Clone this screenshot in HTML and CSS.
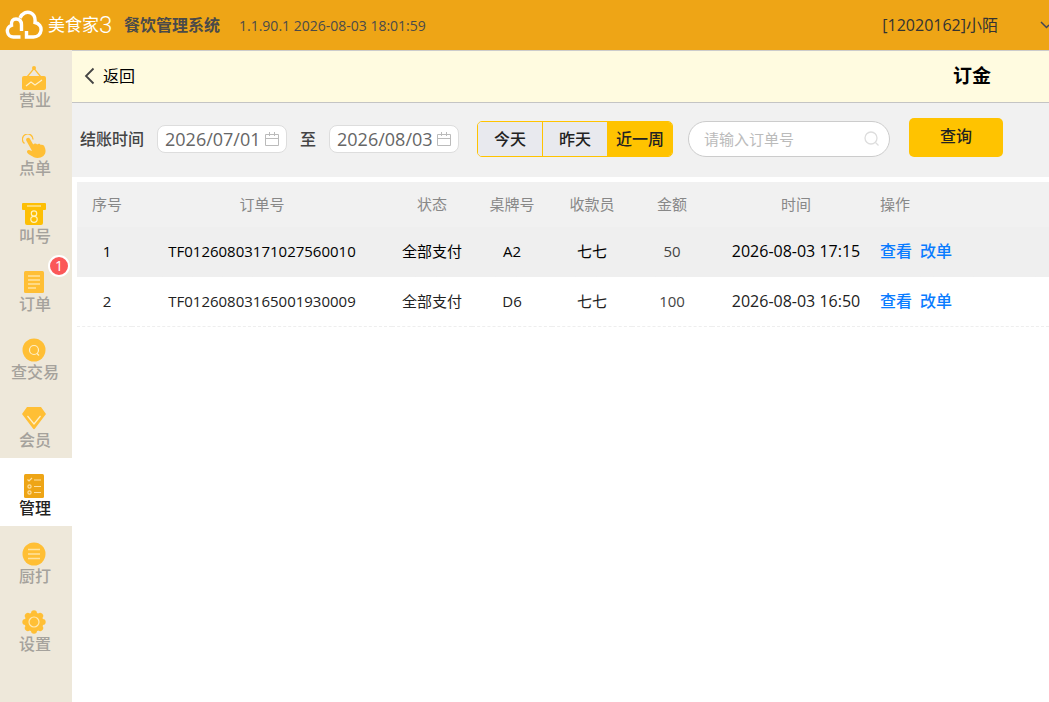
FILE: index.html
```
<!DOCTYPE html>
<html lang="zh-CN">
<head>
  <meta charset="UTF-8">
  <title>餐饮管理系统 - 订金</title>
  <link rel="stylesheet" href="styles.css">
</head>
<body>
  <header class="topbar">
    <div class="logo">
      <svg width="38" height="30" viewBox="0 0 38 30" fill="none" stroke="#fff" stroke-width="3.4">
        <path d="M15.500 27H8.500a6 6 0 0 1-2-11.700C6 11 8 9 11 9c3.500 0 5.500 2 5.500 6v6"/>
        <path d="M15 8c2-5 7-7 11-5 3.500 1.700 4.500 5 4 9.500 4 1 6.500 4 6 8-.500 4-3.500 6.500-7.500 6.500H21.500v-6"/>
      </svg>
      <span class="logo-text">美食家</span><span class="logo-num">3</span>
    </div>
    <span class="system">餐饮管理系统</span>
    <span class="version">1.1.90.1 2026-08-03 18:01:59</span>
    <span class="user">[12020162]小陌</span>
    <svg class="more" width="9" height="8" viewBox="0 0 9 8" fill="none" stroke="#445" stroke-width="1.500"><path d="M1 1l5.500 5.500L9 4"/></svg>
  </header>

  <div class="layout">
    <nav class="sidebar">
      <a href="#">
        <svg width="24" height="24" viewBox="0 0 24 24"><path d="M5 11L12 2.500 19 11" fill="none" stroke="#ffbf35" stroke-width="1.200"/><circle cx="12" cy="2" r="2" fill="#ffbf35"/><rect y="10" width="24" height="14" rx="2" fill="#ffbf35"/><path d="M4 20l5-4 4 3 7-5" fill="none" stroke="#fff0c8" stroke-width="1.200"/></svg>
        <span>营业</span>
      </a>
      <a href="#">
        <svg width="24" height="24" viewBox="0 0 24 24"><path d="M2.500 9.500a5.300 5.300 0 1 1 8.500-4" fill="none" stroke="#ffbf35" stroke-width="1.300"/><path d="M4.500 4.500c1.200-1.300 3-.8 3.700.7l3 5.300c1-1.500 3-1.500 4 0 1-1 3-1 3.500.5 1.500-.8 3.200 0 3.700 1.500 1.700 3.500 1.700 7-1 9.500-2.500 2-6.500 2.500-9.500 1.200-2-1-5-2.700-6.500-4.200-1-1.500 0-3.200 1.700-2.900l3 .9L4.500 7c-.5-1-.5-1.800 0-2.500z" fill="#ffbf35"/></svg>
        <span>点单</span>
      </a>
      <a href="#">
        <svg width="24" height="24" viewBox="0 0 24 24"><path d="M1 1h22a1 1 0 0 1 1 1v5a1 1 0 0 1-1 1h-2v13a2 2 0 0 1-2 2H5a2 2 0 0 1-2-2V8H1a1 1 0 0 1-1-1V2a1 1 0 0 1 1-1z" fill="#fdbf05"/><path d="M5 4h14" stroke="#ffe58f" stroke-width="1.500"/><g fill="none" stroke="#fff3c0" stroke-width="1.200"><ellipse cx="12" cy="11.500" rx="2.700" ry="2.700"/><ellipse cx="12" cy="17.300" rx="3.200" ry="3"/></g></svg>
        <span>叫号</span>
      </a>
      <a href="#">
        <svg width="24" height="24" viewBox="0 0 24 24"><rect x="2" y="1" width="20" height="22" rx="1.500" fill="#ffbf35"/><path d="M6 6h12M6 10h12M6 14h12M6 18h8" stroke="#ffe3a0" stroke-width="1.500"/></svg>
        <span>订单</span>
        <i class="badge">1</i>
      </a>
      <a href="#">
        <svg width="24" height="24" viewBox="0 0 24 24"><circle cx="12" cy="12" r="11.500" fill="#ffbf35"/><g fill="none" stroke="#fff0c8" stroke-width="1.200"><circle cx="12" cy="12" r="4.500"/><path d="M15 15.500l2 2"/></g></svg>
        <span>查交易</span>
      </a>
      <a href="#">
        <svg width="24" height="24" viewBox="0 0 24 24"><path d="M5 1h14l5 7-11 14.500a1.200 1.200 0 0 1-2 0L0 8z" fill="#ffbf35"/><path d="M5.500 10l6.500 8 6.500-8" fill="none" stroke="#fff0c8" stroke-width="1.200"/></svg>
        <span>会员</span>
      </a>
      <a href="#" class="active">
        <svg width="24" height="24" viewBox="0 0 24 24"><rect x="2" width="20" height="24" rx="1.500" fill="#eea516"/><g fill="none" stroke="#ffe0a0" stroke-width="1.200"><path d="M5.500 5.500L7 7l3-3M12 6h7M12 12.500h7M12 18.500h7"/><circle cx="7.500" cy="12.500" r="1.600"/><circle cx="7.500" cy="18.500" r="1.600"/></g></svg>
        <span>管理</span>
      </a>
      <a href="#">
        <svg width="24" height="24" viewBox="0 0 24 24"><circle cx="12" cy="12" r="11.500" fill="#ffbf35"/><path d="M6 7.500h12M6 12h12M6 16.500h12" stroke="#ffe3a0" stroke-width="1.500"/></svg>
        <span>厨打</span>
      </a>
      <a href="#">
        <svg width="24" height="24" viewBox="0 0 24 24"><g fill="#ffbf35"><circle cx="12" cy="12" r="9.500"/><g id="teeth"><circle cx="12" cy="3.300" r="3"/><circle cx="12" cy="20.700" r="3"/><circle cx="3.300" cy="12" r="3"/><circle cx="20.700" cy="12" r="3"/></g><use href="#teeth" transform="rotate(45 12 12)"/></g><circle cx="12" cy="12" r="5" fill="none" stroke="#ffe9b5" stroke-width="1.200"/></svg>
        <span>设置</span>
      </a>
    </nav>

    <main class="content">
      <div class="crumb">
        <a href="#" class="back">
          <svg width="11" height="18" viewBox="0 0 11 18" fill="none" stroke="#444" stroke-width="1.800"><path d="M9.500 1.500L2 9l7.500 7.500"/></svg>
          返回
        </a>
        <h1>订金</h1>
      </div>

      <form class="filter">
        <div class="dates">
          <label for="start">结账时间</label>
          <div class="date">
            <input type="text" id="start" value="2026/07/01">
            <svg width="14" height="14" viewBox="0 0 14 14" fill="none" stroke="#bbb"><path d="M.5 2.500h13v11H.5zM.5 6.500h13M4.500 0v4M9.500 0v4"/></svg>
          </div>
          <label for="end">至</label>
          <div class="date">
            <input type="text" id="end" value="2026/08/03">
            <svg width="14" height="14" viewBox="0 0 14 14" fill="none" stroke="#bbb"><path d="M.5 2.500h13v11H.5zM.5 6.500h13M4.500 0v4M9.500 0v4"/></svg>
          </div>
        </div>
        <div class="range">
          <button type="button">今天</button>
          <button type="button">昨天</button>
          <button type="button" class="on">近一周</button>
        </div>
        <div class="search">
          <input type="text" placeholder="请输入订单号" aria-label="订单号">
          <svg width="16" height="16" viewBox="0 0 16 16" fill="none" stroke="#ddd" stroke-width="1.300"><circle cx="7" cy="7" r="6"/><path d="M11.500 11.500l3 3"/></svg>
        </div>
        <button type="submit" class="query">查询</button>
      </form>

      <table class="orders">
        <thead>
          <tr>
            <th class="c-no">序号</th>
            <th class="c-order">订单号</th>
            <th class="c-mid">状态</th>
            <th class="c-mid">桌牌号</th>
            <th class="c-mid">收款员</th>
            <th class="c-mid">金额</th>
            <th class="c-time">时间</th>
            <th class="c-ops">操作</th>
          </tr>
        </thead>
        <tbody>
          <tr class="current">
            <td class="c-no">1</td>
            <td>TF01260803171027560010</td>
            <td>全部支付</td>
            <td>A2</td>
            <td>七七</td>
            <td class="amount">50</td>
            <td class="time">2026-08-03 17:15</td>
            <td class="c-ops"><a href="#">查看</a><a href="#">改单</a></td>
          </tr>
          <tr>
            <td class="c-no">2</td>
            <td>TF01260803165001930009</td>
            <td>全部支付</td>
            <td>D6</td>
            <td>七七</td>
            <td class="amount">100</td>
            <td class="time">2026-08-03 16:50</td>
            <td class="c-ops"><a href="#">查看</a><a href="#">改单</a></td>
          </tr>
        </tbody>
      </table>
    </main>
  </div>
</body>
</html>
```
FILE: styles.css
```
* { box-sizing: border-box; }
body { margin: 0; min-height: 100vh; display: flex; flex-direction: column; background: #fff; color: #333; font-family: "Open Sans", "Noto Sans CJK SC", sans-serif; font-size: 16px; line-height: 20px; }
a { text-decoration: none; }
svg { flex: none; }
button, input { font-family: inherit; font-size: 16px; }

.topbar { display: flex; align-items: center; height: 50px; background: #eea516; overflow: hidden; white-space: nowrap; }
.logo { display: flex; align-items: center; width: 124px; padding-left: 5px; color: #fff; }
.logo-text { margin-left: 5px; font-size: 17px; }
.logo-num { font-family: Roboto, sans-serif; font-size: 24px; font-weight: 300; }
.system { width: 115px; font-weight: bold; color: #4a4a4a; }
.version { padding-top: 2px; font-size: 14px; color: #4a4a4a; }
.user { margin-left: auto; color: #333; }
.more { margin-left: 42px; }

.layout { flex: 1; display: flex; }
.sidebar { width: 72px; flex: none; background: #eee8da; }
.sidebar a { position: relative; display: flex; flex-direction: column; align-items: center; height: 68px; padding: 16px 4px 0 0; color: #a5a29c; font-weight: 500; }
.sidebar span { margin-left: 2px; }
.sidebar a.active { background: #fff; color: #222; }
.badge { position: absolute; top: 1px; right: 2px; width: 22px; height: 22px; border: 2px solid #fff; border-radius: 50%; background: #fb5858; color: #fff; font-size: 14px; font-style: normal; line-height: 18px; text-align: center; }

.content { flex: 1; min-width: 0; border-top: 1px solid #ccc; }
.crumb { display: flex; align-items: center; justify-content: space-between; height: 52px; padding: 0 58px 2px 12px; background: #fffbe0; border-bottom: 1px solid #c4c4c4; }
.back { display: flex; align-items: center; gap: 8px; color: #000; }
.crumb h1 { margin: 0; font-size: 19px; color: #000; }

.filter { display: flex; align-items: flex-end; padding: 15px 0 20px 8px; background: #f1f1f1; white-space: nowrap; }
.dates { display: flex; align-items: center; gap: 13px; height: 36px; margin-right: 18px; }
.dates label { font-weight: 500; color: #444; }
.date { display: flex; align-items: center; width: 130px; height: 28px; padding: 0 7px; border: 1px solid #ddd; border-radius: 8px; background: #fff; }
.date input { flex: 1; width: 0; padding: 0; border: 0; background: none; color: #666; font-size: 18px; }
.range { display: flex; width: 196px; height: 36px; margin-right: 15px; border: 1px solid #ffc300; border-radius: 5px; overflow: hidden; }
.range button { flex: 1; padding: 0 0 2px; border: 0; border-right: 1px solid #ffc300; background: #e8e9ee; color: #222; font-weight: 500; }
.range button.on { border-right: 0; background: #ffc300; }
.search { display: flex; align-items: center; width: 202px; height: 36px; margin-right: 19px; padding: 0 9px 0 15px; border: 1px solid #ccc; border-radius: 18px; background: #fff; }
.search input { flex: 1; width: 0; padding: 0; border: 0; background: none; font-size: 15px; }
.search input::placeholder { color: #bbb; }
input:focus { outline: none; }
.query { width: 94px; height: 39px; padding: 0 0 5px; border: 0; border-radius: 5px; background: #ffc300; color: #222; font-weight: 500; }

.orders { width: calc(100% - 5px); margin: 5px 0 0 5px; table-layout: fixed; border-spacing: 0; font-size: 15px; text-align: center; }
.orders th { height: 45px; padding: 0 0 2px; background: #f1f1f1; color: #888; font-weight: normal; }
.orders td { height: 50px; padding: 0 0 1px; border-bottom: 1px dashed #eee; color: #222; }
.orders .current td { background: #efefef; border-bottom-color: #efefef; color: #000; }
.orders .c-no { width: 55px; padding-left: 5px; }
.orders .c-order { width: 260px; }
.orders .c-mid { width: 80px; }
.orders .c-time { width: 168px; }
.orders .c-ops { text-align: left; }
.orders td.amount { color: #444; }
.orders td.time { font-size: 16px; }
.orders td a { margin-right: 8px; color: #0a7cff; font-size: 16px; font-weight: 500; }
```
